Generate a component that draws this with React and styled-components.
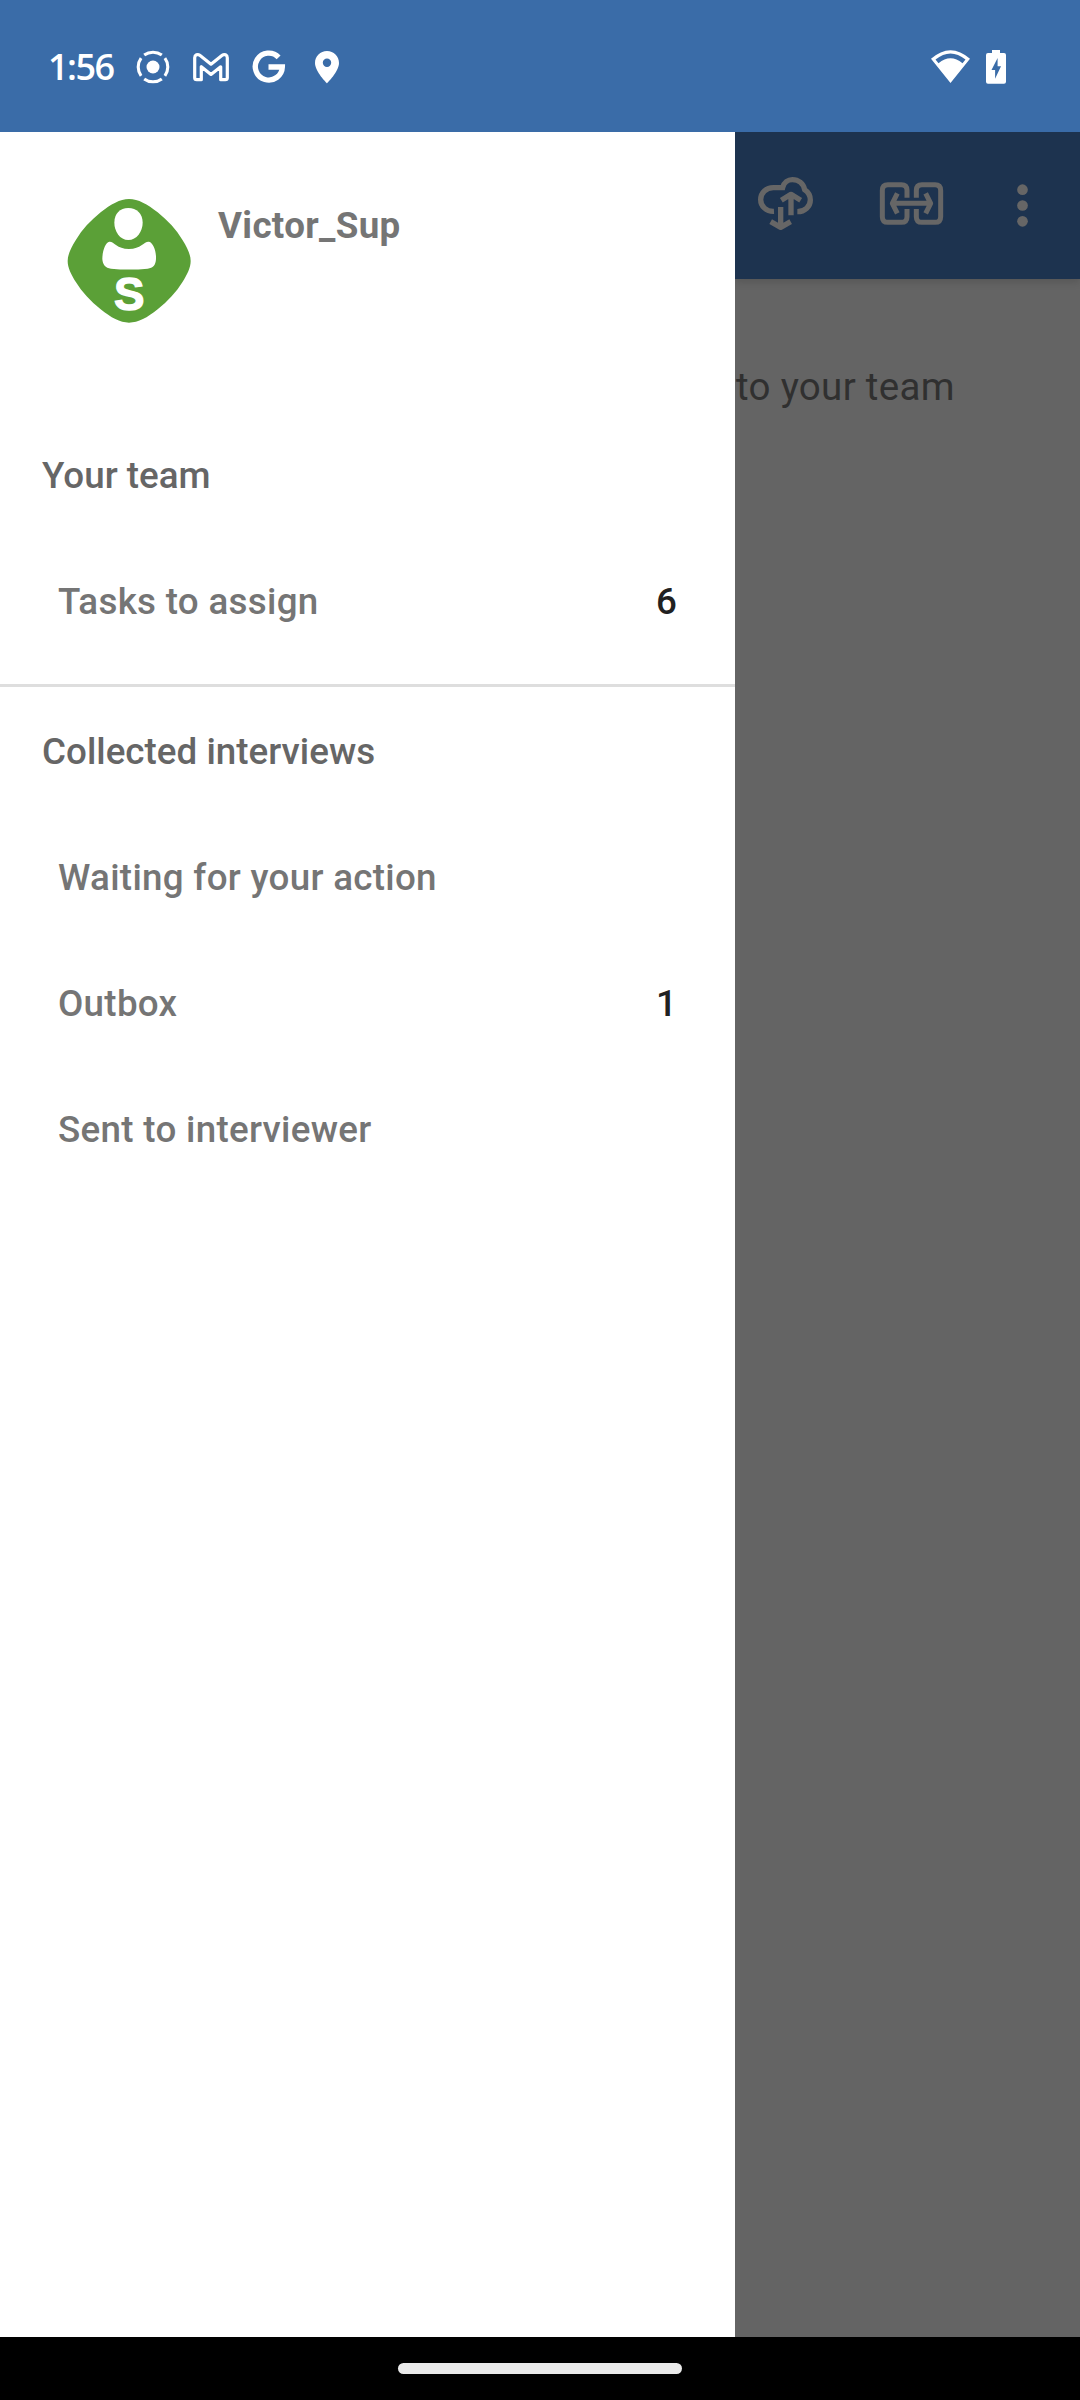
import React from "react";
import styled, { createGlobalStyle } from "styled-components";

const GlobalStyle = createGlobalStyle`
  *, *::before, *::after { box-sizing: border-box; }
  body { margin: 0; background: #000; }
  svg { display: block; flex: none; }
`;

const Screen = styled.div`
  display: flex;
  flex-direction: column;
  width: 1080px;
  height: 2400px;
  overflow: hidden;
  font-family: Roboto, "Liberation Sans", sans-serif;
`;

const StatusBar = styled.header`
  display: flex;
  justify-content: space-between;
  height: 132px;
  padding: 45px 74px 0 48px;
  background: #3a6ca8;
  color: #fff;
`;

const StatusGroup = styled.div`
  display: flex;
  align-items: center;
  height: 44px;
  gap: ${(p) => p.$gap}px;
`;

const Clock = styled.span`
  width: 65px;
  font-family: "Open Sans", "Noto Sans", sans-serif;
  font-size: 36px;
  font-weight: 600;
  line-height: 44px;
  letter-spacing: -1.5px;
  white-space: nowrap;
`;

const Body = styled.div`
  display: flex;
  flex: 1;
`;

const Drawer = styled.nav`
  width: 735px;
  background: #fff;
`;

const Profile = styled.div`
  display: flex;
  align-items: flex-start;
  height: 280px;
  padding: 66px 0 0 67px;
  gap: 26px;
`;

const UserName = styled.span`
  margin-top: 6px;
  font-size: 36.75px;
  font-weight: 700;
  line-height: 44px;
  letter-spacing: 0.33px;
  color: #757575;
`;

const Section = styled.section`
  border-bottom: ${(p) => (p.$divided ? "3px solid #dedede" : "0")};
  padding-bottom: ${(p) => (p.$divided ? 20 : 0)}px;
  margin-bottom: 1px;
`;

const Row = styled.div`
  display: flex;
  align-items: center;
  justify-content: space-between;
  height: 126px;
  padding: 0 58px 0 ${(p) => (p.$heading ? 42 : 58)}px;
  font-size: 36.75px;
  font-weight: 500;
  letter-spacing: ${(p) => (p.$heading ? 0.02 : 0.3)}px;
  white-space: nowrap;
  color: ${(p) => (p.$heading ? "#666" : "#757575")};
`;

const Count = styled.span`
  color: #212121;
  letter-spacing: 0;
`;

const Dimmed = styled.main`
  flex: 1;
  overflow: hidden;
  background: #646464;
`;

const Toolbar = styled.div`
  display: flex;
  align-items: center;
  height: 147px;
  padding-left: 22px;
  background: #1d334f;
  color: #666;
  box-shadow: 0 3px 8px rgba(0, 0, 0, 0.14);
`;

const ToolButton = styled.span`
  display: flex;
  margin-right: ${(p) => p.$gap || 0}px;
  padding-bottom: ${(p) => p.$lift || 0}px;
`;

const Message = styled.p`
  margin: 84px 0 0 1px;
  font-size: 38.5px;
  line-height: 48px;
  letter-spacing: 0.3px;
  white-space: nowrap;
  color: #303030;
`;

const NavBar = styled.footer`
  display: flex;
  justify-content: center;
  height: 63px;
  padding-top: 26px;
  background: #000;
`;

const Handle = styled.div`
  width: 284px;
  height: 11px;
  border-radius: 6px;
  background: #eaeaea;
`;

const PinSlot = styled.span`
  display: flex;
  margin-left: 6px;
`;

const RecordIcon = () => (
  <svg width="34" height="34" viewBox="-17 -17 34 34">
    <circle r="6.5" fill="currentColor" />
    {[0, 90, 180, 270].map((a) => (
      <path
        key={a}
        d="M-8.800 -11.900A14.800 14.800 0 0 1 8.800 -11.900"
        transform={`rotate(${a})`}
        fill="none"
        stroke="currentColor"
        strokeWidth="3.1"
      />
    ))}
  </svg>
);

const MailIcon = () => (
  <svg width="36" height="30" viewBox="193 51 36 30">
    <path
      d="M194.700 56.800c0-3 3-4.100 5.100-2.500L211 63.200l11.200-8.900c2.100-1.600 5.100-.5 5.100 2.500V76.700c0 1.300-.7 2-2 2H220.700V65.800L211 73.400l-9.700-7.600V78.700H196.700c-1.300 0-2-.7-2-2z"
      fill="none"
      stroke="currentColor"
      strokeWidth="3.200"
      strokeLinejoin="round"
    />
  </svg>
);

const GoogleIcon = () => (
  <svg width="34" height="34" viewBox="252 50 34 34">
    <path
      d="M278.600 57.300A13.500 13.500 0 1 0 282.300 67H268.500"
      fill="none"
      stroke="currentColor"
      strokeWidth="5.400"
    />
  </svg>
);

const PinIcon = () => (
  <svg width="24" height="34" viewBox="315 50 24 34">
    <path
      fill="currentColor"
      fillRule="evenodd"
      d="M327 51c-6.700 0-12 5.200-12 11.900C315 71.500 327 83.200 327 83.200s12-11.700 12-20.300C339 56.200 333.700 51 327 51zm0 7.600a4.200 4.200 0 1 1 0 8.400a4.200 4.200 0 0 1 0-8.400z"
    />
  </svg>
);

const WifiIcon = () => (
  <svg width="41" height="34" viewBox="930 49 41 34">
    <path
      fill="currentColor"
      fillRule="evenodd"
      d="M931 57.800Q950.500 40.600 970 57.800L950.500 82zM935.500 58.400L938.500 62.200Q950.500 52.200 962.500 62.200L965.500 58.400Q950.500 46.400 935.500 58.400z"
    />
  </svg>
);

const BatteryIcon = () => (
  <svg width="20" height="34" viewBox="986 49 20 34">
    <path
      fill="currentColor"
      fillRule="evenodd"
      d="M992 49h8v3h4q2 0 2 2v26.700q0 2-2 2h-16q-2 0-2-2V54q0-2 2-2h4zM997.600 57L991.500 69h3.600v8.700L1001 65.300h-3.400z"
    />
  </svg>
);

const Avatar = () => (
  <svg width="125" height="125" viewBox="51 54 375 375">
    <path
      fill="#5ba037"
      d="M237 57C265 57 292 73 323 97C354 122 379 149 397 179C412 203 422 224 422 243C422 263 412 283 397 307C379 336 354 363 323 388C292 413 265 428 237 428C210 428 183 413 152 388C121 363 96 336 78 307C63 283 53 263 53 243C53 224 63 203 78 179C96 149 121 122 152 97C183 73 210 57 237 57z"
    />
    <path
      fill="#fff"
      d="M235 84C260 84 278 101 278 128C278 154 260 180 235 180C210 180 193 154 193 128C193 101 210 84 235 84z"
    />
    <path
      fill="#fff"
      d="M178 185C191 183 199 206 237 207C274 206 283 183 297 185C310 188 319 214 318 237C317 256 309 264 293 266Q237 271 183 266C166 264 158 254 157 237C157 214 166 187 178 185z"
    />
    <text
      x="238"
      y="391"
      textAnchor="middle"
      fill="#fff"
      stroke="#fff"
      strokeWidth="4"
      fontFamily="Liberation Sans, Arial, sans-serif"
      fontWeight="700"
      fontSize="137"
    >
      S
    </text>
  </svg>
);

const CloudSyncIcon = () => (
  <svg width="57" height="55" viewBox="96 168 171 165" fill="none" stroke="currentColor" strokeWidth="16" strokeLinejoin="round">
    <path d="M147 274C124 275 107 259 107 239C107 217 124 203 145 203H173C177 187 189 179 202 179C221 179 235 191 239 209C250 216 256 227 256 240C256 259 240 275 217 275" strokeLinejoin="miter" />
    <path d="M198 286V225M169 241L198 223L227 241" />
    <path d="M167 261V320M137 305L167 322L197 305" />
  </svg>
);

const LinkIcon = () => (
  <svg width="65" height="45" viewBox="462 183 195 135" fill="none" stroke="currentColor" strokeWidth="15" strokeLinejoin="round">
    <path d="M546 233V211Q546 194 529 194H489Q472 194 472 211V290Q472 307 489 307H529Q546 307 546 290V267" />
    <path d="M574 233V211Q574 194 591 194H630Q647 194 647 211V290Q647 307 630 307H591Q574 307 574 290V267" />
    <path d="M504 250H616M517 220L502 250L517 280M602 220L617 250L602 280" />
  </svg>
);

const MoreIcon = () => (
  <svg width="13" height="45" viewBox="873 189 39 135" fill="currentColor">
    <circle cx="892.500" cy="209" r="16" />
    <circle cx="892.500" cy="256.500" r="16" />
    <circle cx="892.500" cy="304" r="16" />
  </svg>
);

const sections = [
  { title: "Your team", divided: true, items: [["Tasks to assign", 6]] },
  {
    title: "Collected interviews",
    items: [["Waiting for your action"], ["Outbox", 1], ["Sent to interviewer"]],
  },
];

export default function App() {
  return (
    <Screen>
      <GlobalStyle />
      <StatusBar>
        <StatusGroup $gap={23}>
          <Clock>1:56</Clock>
          <RecordIcon />
          <MailIcon />
          <GoogleIcon />
          <PinSlot>
            <PinIcon />
          </PinSlot>
        </StatusGroup>
        <StatusGroup $gap={15}>
          <WifiIcon />
          <BatteryIcon />
        </StatusGroup>
      </StatusBar>
      <Body>
        <Drawer>
          <Profile>
            <Avatar />
            <UserName>Victor_Sup</UserName>
          </Profile>
          {sections.map((s) => (
            <Section key={s.title} $divided={s.divided}>
              <Row $heading>{s.title}</Row>
              {s.items.map(([label, count]) => (
                <Row key={label}>
                  <span>{label}</span>
                  {count != null && <Count>{count}</Count>}
                </Row>
              ))}
            </Section>
          ))}
        </Drawer>
        <Dimmed>
          <Toolbar>
            <ToolButton $gap={65} $lift={4}>
              <CloudSyncIcon />
            </ToolButton>
            <ToolButton $gap={72} $lift={4}>
              <LinkIcon />
            </ToolButton>
            <ToolButton>
              <MoreIcon />
            </ToolButton>
          </Toolbar>
          <Message>to your team</Message>
        </Dimmed>
      </Body>
      <NavBar>
        <Handle />
      </NavBar>
    </Screen>
  );
}
